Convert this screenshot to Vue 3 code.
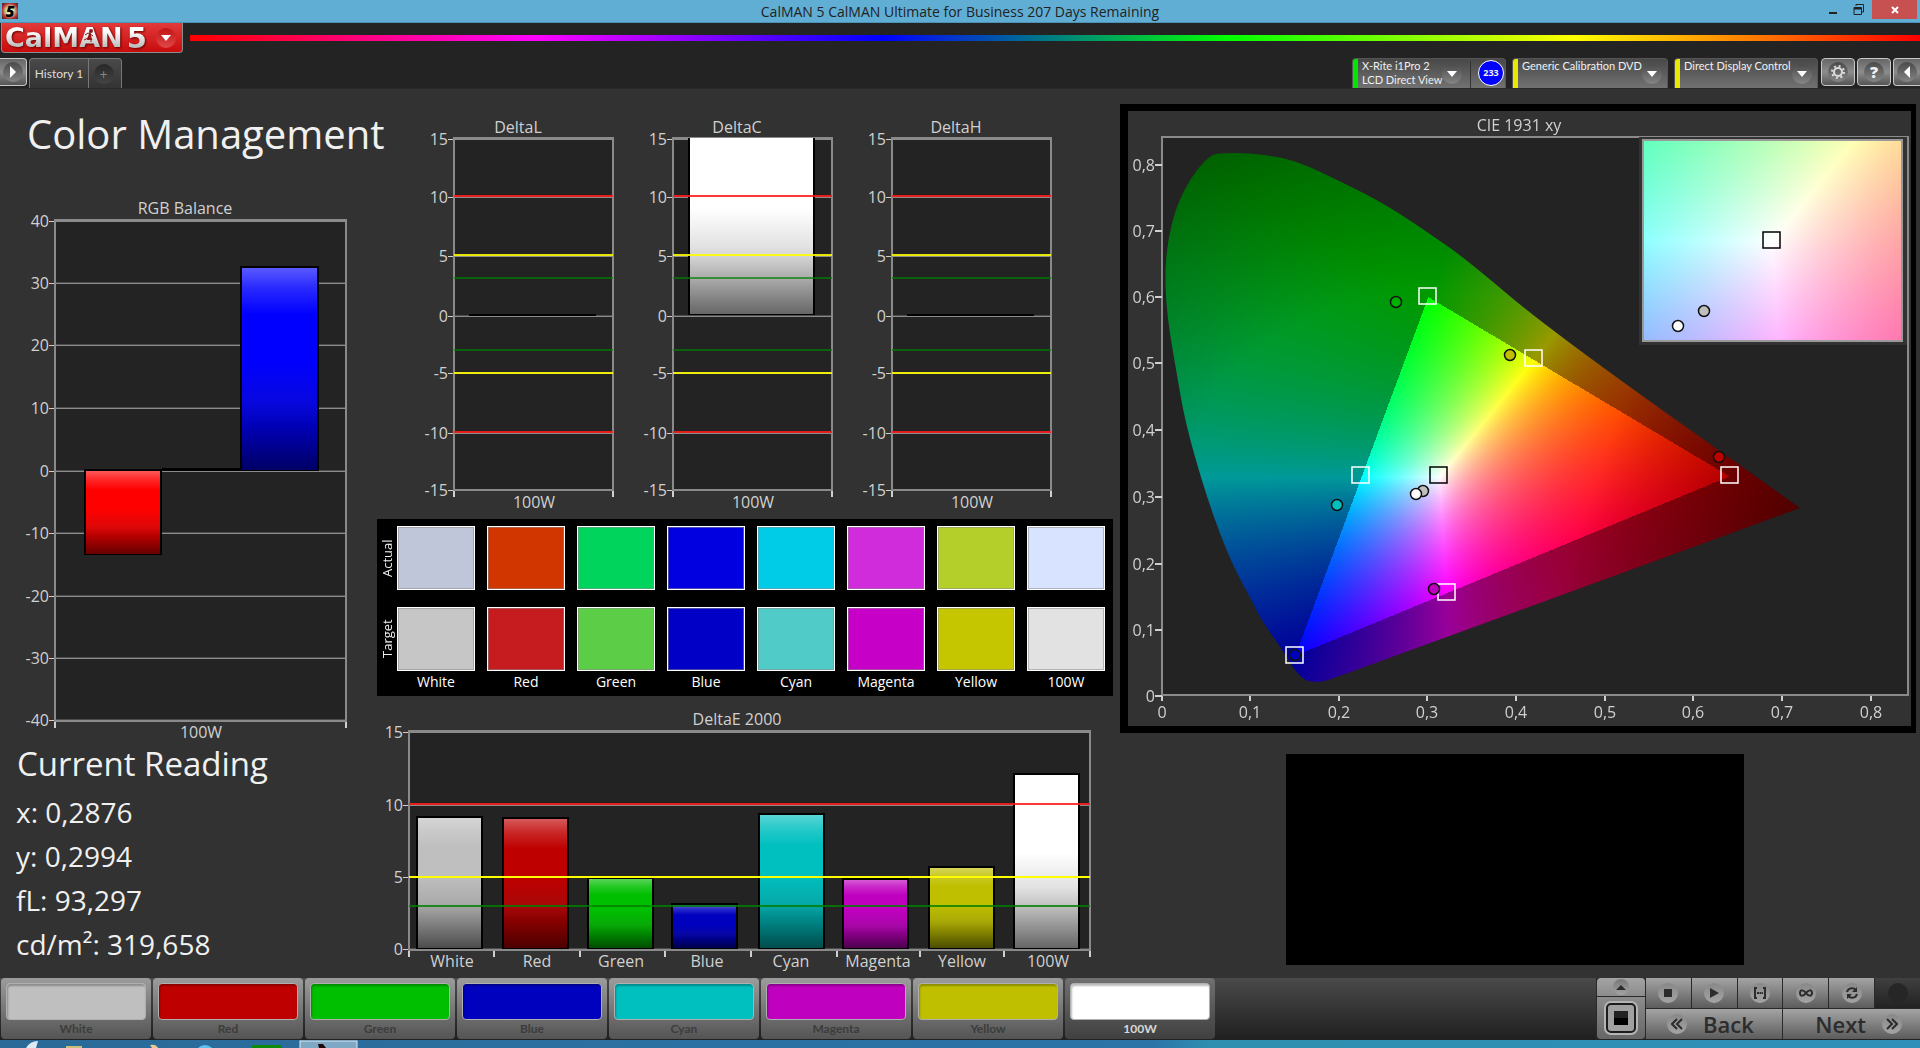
<script setup>
import { h, onMounted, ref } from 'vue'

const baseColors = {
  White: '#bfbfbf', Red: '#bf0000', Green: '#00bf00', Blue: '#0000bf',
  Cyan: '#00bfbf', Magenta: '#bf00bf', Yellow: '#bfbf00', '100W': '#ffffff'
}
const names = Object.keys(baseColors)

// Bar chart drawn from explicit plot geometry
function BarChart({ chart }) {
  const [l, t, r, b] = chart.plot
  const id = chart.id
  const rect = (x, y, width, height, fill) => h('rect', { x, y, width, height, fill })
  return h('svg', { class: 'chart', viewBox: chart.view.join(' '), role: 'img', 'aria-label': chart.title.text }, [
    h('defs', [
      h('linearGradient', { id: 'shade-' + id, x1: 0, y1: 0, x2: 0, y2: 1 }, [
        [0, '#fff', 0.35], [0.1, '#fff', 0.16], [0.23, '#fff', 0], [0.45, '#303030', 0], [0.65, '#303030', 0.14],
        [0.78, '#000', 0.28], [1, '#000', 0.6]
      ].map(([offset, c, o]) => h('stop', { offset, 'stop-color': c, 'stop-opacity': o }))),
      h('clipPath', { id: 'clip-' + id }, [rect(l, t, r - l, b - t + 2)])
    ]),
    h('g', { 'shape-rendering': 'crispEdges' }, [
      rect(l, t, r - l, b - t, '#232323'),
      ...chart.ticks.map(([, y]) => h('g', [
        rect(l, y - 1, r - l, 1, '#4c4c4c'), rect(l, y, r - l, 1, '#8c8c8c'), rect(l - 6, y, 6, 1, '#cfcfcf')
      ])),
      h('rect', { x: l, y: t, width: r - l, height: b - t, fill: 'none', stroke: '#8a8a8a', 'stroke-width': 2 }),
      h('g', { 'clip-path': `url(#clip-${id})` }, chart.bars.map(([x, y, w, hh, c]) => h('g', [
        rect(x, y, w, hh, '#000'),
        hh > 4 ? rect(x + 2, y + 2, w - 4, hh - 3, c) : null,
        hh > 4 ? rect(x + 2, y + 2, w - 4, hh - 3, `url(#shade-${id})`) : null
      ]))),
      ...chart.limits.map(([y, c, w]) => rect(l, y, r - l, w, c)),
      ...chart.xticks.map((x) => rect(x - 1, b + 1, 2, 6, '#cfcfcf'))
    ]),
    ...chart.ticks.map(([label, y]) => h('text', { x: l - 6, y: y + 6, 'text-anchor': 'end' }, label)),
    ...chart.cats.map(([label, x]) => h('text', { x, y: b + chart.catGap, 'text-anchor': 'middle' }, label)),
    h('text', { x: chart.title.x, y: chart.title.y, 'text-anchor': 'middle' }, chart.title.text)
  ])
}
BarChart.props = ['chart']

const rgbChart = {
  id: 'rgb', view: [0, 161, 372, 580], plot: [55, 220, 346, 721], catGap: 17,
  title: { text: 'RGB Balance', x: 185, y: 214 },
  ticks: [['40', 221], ['30', 283], ['20', 345], ['10', 408], ['0', 471], ['-10', 533], ['-20', 596], ['-30', 658], ['-40', 720]],
  bars: [[84, 469, 78, 86, '#ff0000'], [162, 468, 79, 3, '#000'], [240, 266, 79, 205, '#0000ff']],
  limits: [], xticks: [55, 346], cats: [['100W', 201]]
}

const red = '#ff1a1ae0', yellow = '#ffff00e0', green = '#008000b0'
const deltaChart = (text, x, bar) => ({
  id: text, view: [395, 89, 219, 430], plot: [454, 138, 613, 490], catGap: 18,
  title: { text, x, y: 133 },
  ticks: [['15', 139], ['10', 197], ['5', 256], ['0', 316], ['-5', 373], ['-10', 433], ['-15', 490]],
  bars: [bar],
  limits: [[195, red, 2], [254, yellow, 2], [277, green, 2], [349, green, 2], [372, yellow, 2], [431, red, 2]],
  xticks: [454, 613], cats: [['100W', 534]]
})
const deltaCharts = [
  deltaChart('DeltaL', 518, [469, 314, 127, 2, '#000']),
  deltaChart('DeltaC', 518, [469, 120, 127, 195, '#ffffff']),
  deltaChart('DeltaH', 518, [469, 314, 127, 2, '#000'])
]

const tops = [816, 817, 877, 903, 813, 878, 866, 773]
const lefts = [416, 502, 587, 671, 758, 842, 928, 1013]
const deltaE = {
  id: 'de', view: [372, 696, 746, 282], plot: [409, 731, 1090, 950], catGap: 17,
  title: { text: 'DeltaE 2000', x: 737, y: 725 },
  ticks: [['15', 732], ['10', 805], ['5', 877], ['0', 949]],
  bars: names.map((n, i) => [lefts[i], tops[i], 67, 949 - tops[i], baseColors[n]]),
  limits: [[803, red, 2], [876, '#ffff00', 2], [905, '#008000d0', 2]],
  xticks: [409, 494, 580, 665, 751, 837, 920, 1004, 1090],
  cats: names.map((n, i) => [n, [452, 537, 621, 707, 791, 878, 962, 1048][i]])
}

const swatchRows = [
  { label: 'Actual', colors: ['#c0c6da', '#d23600', '#00d45d', '#0000e0', '#00cce8', '#d02cdc', '#b4ce2a', '#d8e3ff'] },
  { label: 'Target', colors: ['#c6c6c6', '#c61c20', '#5ccd46', '#0000c6', '#50cbc8', '#c600c6', '#c6c600', '#e2e2e2'] }
]

const readings = ['x: 0,2876', 'y: 0,2994', 'fL: 93,297', 'cd/m²: 319,658']

// CIE chart
const yTicks = ['0,8', '0,7', '0,6', '0,5', '0,4', '0,3', '0,2', '0,1', '0'].map((t, i) => [t, [164, 230, 296, 362, 429, 496, 563, 629, 695][i]])
const xTicks = ['0', '0,1', '0,2', '0,3', '0,4', '0,5', '0,6', '0,7', '0,8'].map((t, i) => [t, [1162, 1250, 1339, 1427, 1516, 1605, 1693, 1782, 1871][i]])
const squares = [[1427, 296], [1533, 358], [1729, 475], [1360, 475], [1446, 592], [1294, 655]]
const dots = [
  [1396, 302, '#00b000'], [1510, 355, '#bfbf00'], [1719, 457, '#bf0000'], [1337, 505, '#00bfbf'],
  [1423, 491, '#bfbfbf'], [1416, 494, '#ffffff'], [1434, 589, '#bf00bf'], [1295, 655, '#0000bf'],
  [1704, 311, '#bfbfbf'], [1678, 326, '#ffffff']
]
const locus = [
  [1304, 680], [1314, 682], [1322, 682], [1340, 676], [1800, 508], [1800, 508], [1551, 331], [1466, 259], [1430, 234],
  [1399, 213], [1368, 195], [1337, 180], [1306, 165], [1280, 157], [1249, 153], [1221, 153], [1211, 155],
  [1198, 168], [1185, 188], [1175, 211], [1168, 240], [1165, 269], [1166, 302], [1170, 335], [1176, 369],
  [1183, 410], [1190, 439], [1197, 464], [1207, 497], [1220, 534], [1234, 568], [1251, 599], [1260, 618],
  [1286, 655], [1293, 668]
]

const gamut = ref(null)
const detail = ref(null)

// Linear RGB of a chromaticity, normalised so that the strongest channel is full
function chroma(x, y) {
  const X = x / y, Z = (1 - x - y) / y
  const rgb = [
    3.2406 * X - 1.5372 - 0.4986 * Z,
    -0.9689 * X + 1.8758 + 0.0415 * Z,
    0.0557 * X - 0.204 + 1.057 * Z
  ]
  const inside = rgb.every((v) => v >= 0)
  const top = Math.max(...rgb)
  return { rgb: rgb.map((v) => Math.max(0, v) / top), inside }
}

function paint(canvas, map) {
  const ctx = canvas.getContext('2d')
  const { width, height } = canvas
  const img = ctx.createImageData(width, height)
  for (let j = 0; j < height; j++) {
    for (let i = 0; i < width; i++) {
      const c = map(i, j)
      const o = (j * width + i) * 4
      for (let k = 0; k < 3; k++) img.data[o + k] = c[k] * 255
      img.data[o + 3] = 255
    }
  }
  ctx.putImageData(img, 0, 0)
  return ctx
}

onMounted(() => {
  const ctx = paint(gamut.value, (i, j) => {
    const x = i / 886, y = Math.max(0.005, (558 - j) / 664)
    const { rgb, inside } = chroma(x, y)
    const d = Math.hypot(x - 0.3127, y - 0.329)
    const redFade = Math.max(0, x - 0.4907 - 0.258 * (y - 0.333)) * 2
    const greenFade = y > 0.329 && x < 0.4 ? Math.max(0, d - 0.28) * 1.35 : 0
    const v = (1 - Math.max(redFade, greenFade)) * (inside ? 1 : 0.6)
    return rgb.map((c) => c * v)
  })
  ctx.globalCompositeOperation = 'destination-in'
  const pts = locus.map(([x, y]) => [x - 1162, y - 137])
  const mid = (a, b) => [(a[0] + b[0]) / 2, (a[1] + b[1]) / 2]
  ctx.beginPath()
  ctx.moveTo(...mid(pts[pts.length - 1], pts[0]))
  pts.forEach((p, i) => ctx.quadraticCurveTo(...p, ...mid(p, pts[(i + 1) % pts.length])))
  ctx.fill()

  paint(detail.value, (i, j) => chroma(0.3127 + (i - 129) * 0.000263, 0.329 - (j - 101) * 0.000352).rgb)
})
</script>

<template>
  <div class="app">
    <header class="titlebar">
      <span class="appicon">5</span>
      <span class="wintitle">CalMAN 5 CalMAN Ultimate for Business 207 Days Remaining</span>
      <div class="winbtns">
        <button class="win" aria-label="Minimize"><svg width="12" height="14"><rect x="2" y="9" width="8" height="2" fill="#222" /></svg></button>
        <button class="win" aria-label="Restore"><svg width="12" height="14" fill="none" stroke="#222"><path d="M3 3V1.500H10.500V9H9M1 4.500H8.500V11.500H1Z" /><path d="M1 5.500H8" stroke-width="2" /></svg></button>
        <button class="win close" aria-label="Close"><svg width="12" height="14"><path d="M3 4l6 6M9 4l-6 6" stroke="#fff" stroke-width="2" /></svg></button>
      </div>
    </header>

    <div class="brandbar">
      <button class="brand">
        <span class="brandname">CalMAN</span><span class="brandname five">5</span>
        <svg class="runner" width="12" height="14" viewBox="0 0 12 14" fill="none" stroke="#8c1515" stroke-width="2"><circle cx="8" cy="2" r="1" /><path d="M2 6l3-2 3 1-3 4 3 1v3M5 9l-4 2M7 5l3 2" stroke-width="1" /></svg>
        <span class="knob redknob"><svg width="10" height="6"><path d="M0 0H10L5 6Z" fill="#fff" /></svg></span>
      </button>
      <div class="rainbow"></div>
    </div>

    <nav class="tabs">
      <button class="square left" aria-label="Show panel"><span class="knob"><svg width="8" height="12"><path d="M1 0L7 6L1 12Z" fill="#fff" /></svg></span></button>
      <div class="history">
        <button class="tab">History 1</button>
        <button class="tab plus" aria-label="Add history"><span class="knob darkknob">+</span></button>
      </div>
      <div class="devices">
        <button class="device meter">
          <span class="strip go"></span><span class="devname">X-Rite i1Pro 2<br>LCD Direct View</span>
          <span class="knob"><svg width="10" height="6"><path d="M0 0H10L5 6Z" fill="#fff" /></svg></span>
          <span class="divider"></span>
          <span class="count">233</span>
        </button>
        <button class="device source">
          <span class="strip"></span><span class="devname">Generic Calibration DVD</span>
          <span class="knob"><svg width="10" height="6"><path d="M0 0H10L5 6Z" fill="#fff" /></svg></span>
        </button>
        <button class="device display">
          <span class="strip"></span><span class="devname">Direct Display Control</span>
          <span class="knob"><svg width="10" height="6"><path d="M0 0H10L5 6Z" fill="#fff" /></svg></span>
        </button>
        <button class="square" aria-label="Settings"><span class="knob"><svg width="14" height="14" viewBox="0 0 14 14" fill="none" stroke="#ddd"><circle cx="7" cy="7" r="4" stroke-width="2" /><circle cx="7" cy="7" r="6" stroke-width="2" stroke-dasharray="2 2.700" /></svg></span></button>
        <button class="square" aria-label="Help"><span class="knob help">?</span></button>
        <button class="square right" aria-label="Hide panel"><span class="knob"><svg width="8" height="12"><path d="M7 0L1 6L7 12Z" fill="#fff" /></svg></span></button>
      </div>
    </nav>

    <main class="work">
      <section class="col">
        <h1>Color Management</h1>
        <BarChart :chart="rgbChart" />
        <h2>Current Reading</h2>
        <p v-for="r in readings" :key="r" class="reading">{{ r }}</p>
      </section>

      <section class="col">
        <div class="deltas"><BarChart v-for="c in deltaCharts" :key="c.id" :chart="c" /></div>
        <div class="swatches">
          <div v-for="row in swatchRows" :key="row.label" class="swrow">
            <span class="side">{{ row.label }}</span>
            <div class="cells"><span v-for="c in row.colors" :key="c" class="swatch" :style="{ background: c }"></span></div>
          </div>
          <div class="swrow names">
            <span class="side"></span>
            <div class="cells"><span v-for="n in names" :key="n">{{ n }}</span></div>
          </div>
        </div>
        <BarChart :chart="deltaE" />
      </section>

      <section class="col">
        <div class="cie">
          <svg class="chart" viewBox="1128 111 783 615" role="img" aria-label="CIE 1931 xy">
            <rect x="1162" y="137" width="746" height="558" fill="#232323" stroke="#8a8a8a" stroke-width="2" />
            <foreignObject x="1162" y="137" width="746" height="558"><canvas ref="gamut" width="746" height="558"></canvas></foreignObject>
            <g fill="#cfcfcf">
              <rect v-for="[t, y] in yTicks" :key="t" x="1155" :y="y" width="7" height="2" />
              <rect v-for="[t, x] in xTicks" :key="t" :x="x - 1" y="696" width="2" height="5" />
            </g>
            <text v-for="[t, y] in yTicks" :key="t" x="1155" :y="y + 7" text-anchor="end">{{ t }}</text>
            <text v-for="[t, x] in xTicks" :key="t" :x="x" y="718" text-anchor="middle">{{ t }}</text>
            <text x="1519" y="131" text-anchor="middle">CIE 1931 xy</text>
            <rect x="1639" y="137" width="268" height="208" fill="#323232" />
            <foreignObject x="1643" y="140" width="259" height="202"><canvas ref="detail" width="259" height="202"></canvas></foreignObject>
            <rect x="1643" y="140" width="259" height="201" fill="none" stroke="#999" stroke-width="2" />
            <rect v-for="[x, y] in squares" :key="x" :x="x - 8" :y="y - 8" width="17" height="16" fill="none" stroke="#fff" stroke-width="1.500" />
            <rect x="1430" y="467" width="17" height="16" fill="none" stroke="#000" stroke-width="1.500" />
            <rect x="1763" y="232" width="17" height="16" fill="none" stroke="#000" stroke-width="1.500" />
            <circle v-for="[x, y, c] in dots" :key="x" :cx="x" :cy="y" r="5.500" :fill="c" stroke="#111" stroke-width="1.500" />
          </svg>
        </div>
        <div class="preview"></div>
      </section>
    </main>

    <footer class="bottom">
      <button v-for="n in names" :key="n" class="tile" :class="{ active: n === '100W' }">
        <span class="chip" :style="{ background: baseColors[n] }"></span>{{ n }}
      </button>
      <div class="transport">
        <div class="pattern">
          <button class="up" aria-label="Expand"><span class="knob small"><svg width="10" height="5"><path d="M0 5H10L5 0Z" fill="#2c2c2c" /></svg></span></button>
          <button class="window" aria-label="Pattern window"><span></span></button>
        </div>
        <div class="keys">
          <button class="key" aria-label="Stop"><span class="knob lite"><svg width="8" height="8"><rect width="8" height="8" fill="#2c2c2c" /></svg></span></button>
          <button class="key" aria-label="Play"><span class="knob lite"><svg width="9" height="10"><path d="M0 0L9 5L0 10Z" fill="#2c2c2c" /></svg></span></button>
          <button class="key" aria-label="Series"><span class="knob lite"><svg width="14" height="12" fill="none" stroke="#2c2c2c" stroke-width="2"><path d="M4 1H2V11H4M10 1H12V11H10M4 6H6M6.500 6H8M8.500 6H10" /></svg></span></button>
          <button class="key" aria-label="Continuous"><span class="knob lite"><svg width="14" height="8" fill="none" stroke="#2c2c2c" stroke-width="2"><path d="M7 4C5 1 1 0 1 4S5 7 7 4S13 0 13 4S9 7 7 4Z" /></svg></span></button>
          <button class="key" aria-label="Refresh"><span class="knob lite"><svg width="12" height="14" viewBox="0 0 12 14" fill="none" stroke="#2c2c2c" stroke-width="2"><path d="M1 6C2 2 7 1 10 4M11 8C10 12 5 13 2 10" /><path d="M11 1V6H6ZM1 13V8H6Z" fill="#2c2c2c" stroke="none" /></svg></span></button>
          <button class="key off" aria-label="Status"><span class="knob darkknob"></span></button>
          <button class="key nav back"><span class="knob lite"><svg width="12" height="12" fill="none" stroke="#2c2c2c" stroke-width="2"><path d="M6 1L1 6L6 11M11 1L6 6L11 11" /></svg></span>Back</button>
          <button class="key nav next">Next<span class="knob lite"><svg width="12" height="12" fill="none" stroke="#2c2c2c" stroke-width="2"><path d="M1 1L6 6L1 11M6 1L11 6L6 11" /></svg></span></button>
        </div>
      </div>
    </footer>
    <svg class="taskbar" height="8" width="100%">
      <path d="M26 8Q30 1 38 1L36 8Z" fill="#dceaf4" />
      <rect x="66" y="6" width="16" height="2" fill="#c8c078" />
      <path d="M150 5Q156 4 158 8H152Z" fill="#f0c890" />
      <circle cx="205" cy="15" r="10" fill="#5cc0f0" />
      <rect x="252" y="5" width="30" height="3" fill="#0a8c0a" />
      <rect x="300" y="1" width="57" height="10" fill="#7fa8c4" stroke="#dfeaf2" />
      <path d="M318 4L323 4L326 8H319Z" fill="#200808" />
    </svg>
  </div>
</template>

<style>
html, body { margin: 0; background: #232323; }
.chart { display: block; width: 100%; font-size: 16px; fill: #d0d0d0; }
canvas { display: block; }
</style>

<style scoped>
.app { min-height: 100vh; display: flex; flex-direction: column; font-family: "Open Sans", "Noto Sans", sans-serif; color: #f0f0f0; overflow: hidden; }
button { font-family: inherit; border: 0; padding: 0; margin: 0; color: inherit; background: none; box-sizing: border-box; }
svg { flex: none; }

.titlebar { height: 23px; display: grid; grid-template-columns: 1fr auto 1fr; background: #61aed5; color: #222; box-sizing: border-box; border-bottom: 1px solid #4c93b8; }
.appicon { margin: 3px 2px; width: 16px; height: 16px; background: radial-gradient(#d8f0b0 30%, #b03030 70%, #402020); color: #000; font: italic 800 15px/16px "Open Sans", sans-serif; text-align: center; }
.wintitle { font-size: 14px; line-height: 24px; height: 22px; white-space: nowrap; }
.winbtns { display: flex; justify-content: flex-end; align-items: flex-start; padding-right: 3px; }
.win { width: 26px; height: 19px; display: grid; place-items: center; }
.win.close { width: 45px; background: #c75050; }

.brandbar { height: 35px; display: flex; align-items: flex-start; background: #232323; }
.brand { position: relative; width: 182px; height: 30px; margin-left: 1px; padding: 0 6px 0 3px; display: flex; align-items: center; border: 1px solid #8c8c8c; border-top: 0; border-radius: 0 0 4px 4px; background: linear-gradient(#e23a3a, #c80c0c); }
.brandname { white-space: nowrap; font: 700 27px/28px "DejaVu Sans", sans-serif; background: linear-gradient(#fff 25%, #b8b8b8 85%); background-clip: text; color: transparent; filter: drop-shadow(1px 1px 1px #600); }
.five { margin-left: 4px; font-size: 29px; }
.redknob.knob { margin-left: auto; background: linear-gradient(#c41414, #e04848); }
.runner { position: absolute; left: 81px; top: 6px; }
.rainbow { flex: 1; height: 6px; margin: 12px 0 0 7px; background: linear-gradient(90deg, #f00, #f0f, #00f, #0f0, #ff0, #f00); }

.knob { flex: none; width: 20px; height: 20px; border-radius: 50%; display: grid; place-items: center; background: linear-gradient(#4a4a4a, #868686); }
.darkknob { background: linear-gradient(#282828, #444); color: #888; font-size: 13px; line-height: 20px; }
.lite { background: linear-gradient(#888, #a4a4a4); }
.small { width: 16px; height: 16px; background: linear-gradient(#777, #a4a4a4); }

.tabs { height: 31px; display: flex; align-items: flex-start; background: #232323; border-bottom: 1px solid #2a2a2a; box-sizing: border-box; }
.square { width: 34px; height: 28px; display: grid; place-items: center; border: 1px solid #c8c8c8; border-radius: 4px; background: linear-gradient(#666, #8c8c8c 50%, #555); }
.square.left { width: 27px; border-left: 0; border-radius: 0 4px 4px 0; }
.square.right { width: 27px; border-right: 0; border-radius: 4px 0 0 4px; }
.help { font-size: 16px; font-weight: 800; line-height: 20px; }
.history { display: flex; margin-left: 2px; height: 30px; border: 1px solid #777; border-bottom: 0; border-radius: 4px 4px 0 0; box-sizing: border-box; background: linear-gradient(#4a4a4a, #333); }
.tab { width: 58px; font: 12px "Lato", sans-serif; color: #ddd; white-space: nowrap; }
.plus { width: 33px; padding-right: 3px; border-left: 1px solid #777; display: grid; place-items: center; }
.devices { margin-left: auto; display: flex; gap: 2px; }
.device { height: 30px; display: flex; align-items: flex-start; overflow: hidden; border: 1px solid #555; border-bottom: 0; border-radius: 4px 4px 0 0; background: linear-gradient(#484848, #727272); margin-right: 4px; }
.device.display { margin-right: 1px; width: 144px; }
.device .knob { margin: 5px 5px 0 0; }
.meter { width: 154px; }
.source { width: 156px; }
.strip { width: 5px; height: 30px; background: #e8e800; }
.strip.go { background: #00e800; }
.devname { flex: 1; min-width: 0; padding-left: 4px; text-align: left; font: 11px/14px "Lato", sans-serif; white-space: nowrap; }
.meter .devname + .knob { margin-right: 8px; }
.divider { width: 1px; height: 28px; margin-top: 2px; background: #333; }
.count { width: 26px; height: 26px; margin: 1px 1px 0 7px; border-radius: 50%; box-sizing: border-box; border: 1px solid #fff; background: #00f; font: 700 9px/24px "Open Sans", sans-serif; text-align: center; }

.work { flex: 1; display: grid; grid-template-columns: 372fr 746fr 802fr; align-items: start; background: #323232; }
.col { min-width: 0; }
h1 { margin: 0; padding: 18px 0 0 27px; font-size: 40px; line-height: 54px; font-weight: 400; white-space: nowrap; }
h2 { margin: 0 0 4px 17px; font-size: 33px; line-height: 45px; font-weight: 400; }
.reading { margin: 0 0 0 16px; font-size: 28px; line-height: 44px; }
.deltas { display: grid; grid-template-columns: repeat(3, 1fr); padding: 0 66px 0 23px; }
.swatches { margin: 0 5px; padding-top: 7px; height: 177px; box-sizing: border-box; display: flex; flex-direction: column; gap: 17px; background: #000; }
.swrow { display: flex; height: 64px; padding-right: 8px; }
.cells { flex: 1; display: grid; grid-template-columns: repeat(8, 1fr); gap: 12px; }
.swatch { border: 1px solid #fff; box-shadow: inset 0 0 0 1px #8888; }
.side { width: 20px; writing-mode: vertical-rl; transform: rotate(180deg); text-align: center; font-size: 13px; line-height: 20px; }
.names { height: 22px; margin-top: -17px; font-size: 14px; line-height: 22px; text-align: center; color: #fff; }
.cie { margin: 15px 4px 0 2px; border: solid #000; border-width: 7px 5px 7px 8px; }
.preview { width: 57%; height: 211px; margin: 21px 0 0 21%; background: #000; }

.bottom { height: 62px; display: flex; gap: 2px; padding-left: 1px; box-sizing: border-box; background: linear-gradient(#4a4a4a, #202020); border-bottom: 1px solid #222; }
.tile { flex: 0 1 150px; height: 61px; padding: 5px 5px 1px; display: flex; flex-direction: column; border-radius: 4px; background: linear-gradient(#9c9c9c, #545454); color: #3c3c3c; font: 700 12px/18px "Lato", sans-serif; align-items: center; }
.tile.active { background: linear-gradient(#707070, #404040); color: #d8d8d8; }
.chip { flex: none; align-self: stretch; height: 37px; box-sizing: border-box; border: 1px solid #b0b0b0; border-radius: 4px; box-shadow: inset 1px 2px 2px #0004; }
.transport { margin-left: auto; display: flex; gap: 1px; width: 324px; height: 61px; background: #2a2a2a; padding-left: 1px; box-sizing: border-box; }
.pattern { width: 48px; display: flex; flex-direction: column; gap: 1px; }
.up { height: 18px; display: grid; place-items: center; border-radius: 4px 4px 0 0; background: linear-gradient(#a4a4a4, #8c8c8c); }
.window { flex: 1; display: grid; place-items: center; border-radius: 0 0 4px 4px; background: linear-gradient(#8c8c8c, #666); }
.window span { width: 14px; height: 14px; border: 7px solid #a0a0a0; outline: 2px solid #1c1c1c; box-shadow: 0 0 0 3px #b4b4b4; outline-offset: -1px; border-radius: 4px; background: linear-gradient(#222 50%, #000 50%) padding-box; }
.keys { flex: 1; display: grid; grid-template-columns: repeat(6, 1fr); grid-template-rows: 30px 30px; gap: 1px; }
.key { display: grid; place-items: center; background: linear-gradient(#a4a4a4, #5c5c5c); }
.key.off { background: linear-gradient(#404040, #222); }
.key.off .knob { background: #262626; }
.key.nav { grid-column: span 3; display: flex; align-items: center; gap: 16px; font-size: 22px; font-weight: 600; line-height: 30px; color: #2c2c2c; }
.key.back { padding-left: 21px; }
.key.next { padding-right: 18px; justify-content: flex-end; }
.taskbar { display: block; background: linear-gradient(90deg, #2a6a98, #2a74a8 60%, #2f8fb0 63%, #2f8fb8); }
</style>
